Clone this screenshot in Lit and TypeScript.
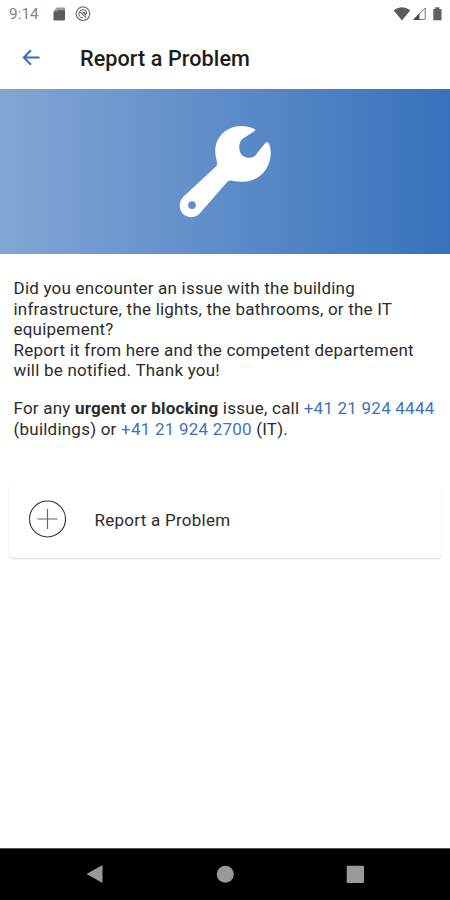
import { LitElement, html, css } from "lit";
import { customElement } from "lit/decorators.js";

@customElement("app-root")
export class AppRoot extends LitElement {
  static styles = css`
    :host {
      display: flex;
      flex-direction: column;
      width: 450px;
      height: 900px;
      overflow: hidden;
      background: #fff;
      color: #2c2c2c;
      font-family: Roboto, sans-serif;
    }
    svg { display: block; }
    .status {
      display: flex;
      justify-content: space-between;
      height: 28px;
      flex: none;
    }
    .left { display: flex; }
    .time {
      box-sizing: border-box;
      width: 44px;
      padding-left: 9px;
      font-size: 15.4px;
      line-height: 29px;
      color: #858585;
    }
    .bar {
      display: flex;
      align-items: center;
      height: 60.5px;
      flex: none;
    }
    .back { margin-left: 19px; }
    h1 {
      margin: 1px 0 0 37px;
      font-size: 21.6px;
      line-height: 30px;
      letter-spacing: 0.08px;
      font-weight: 500;
      color: #1c1c1c;
      white-space: nowrap;
    }
    .hero {
      display: flex;
      align-items: center;
      justify-content: center;
      height: 165.5px;
      flex: none;
      background: linear-gradient(90deg, #82a6d4, #3872bc);
    }
    .copy {
      padding: 24px 0 0 13.5px;
      height: 202.5px;
      flex: none;
      font-size: 17px;
      line-height: 20.55px;
      letter-spacing: 0.22px;
      white-space: nowrap;
    }
    p { margin: 0 0 17.5px; }
    b { font-weight: 700; }
    .tel { color: #3f72bd; text-decoration: none; }
    .card {
      display: flex;
      align-items: center;
      height: 77px;
      margin: 0 8px 0 9px;
      border-radius: 5px;
      flex: none;
      box-shadow: 0 1px 2px rgba(0, 0, 0, 0.15);
      clip-path: inset(5px -4px -5px -4px);
      font-size: 17px;
      letter-spacing: 0.26px;
    }
    .label { padding-top: 1px; }
    .plus { margin: 0 28.5px 0 19px; }
    .nav { margin-top: auto; height: 52px; flex: none; background: #000; border-top: 1px solid #555; box-sizing: border-box; }
  `;

  render() {
    return html`
      <div class="status">
        <div class="left">
          <span class="time">9:14</span>
          <svg width="50" height="28" viewBox="44 0 50 28">
            <path d="M57 7.500h7a1 1 0 0 1 1 1v4h-11v-2z" fill="#999" />
            <path d="M53.500 11.500h3l1.500-1.300h7v9.300a1 1 0 0 1-1 1h-9.500a1 1 0 0 1-1-1z" fill="#5c5c5c" />
            <circle cx="83" cy="13.700" r="6.800" fill="none" stroke="#777" stroke-width="1.200" />
            <path d="M79.800 16.500a4.200 4.200 0 0 1 2.500-6.700c2.700-.6 4.800 1.600 4.400 4.200M79.500 11.500l6.500 6M83 17.700c-1 .1-2-.2-2.700-.8" fill="none" stroke="#777" stroke-width="1.100" />
            <path d="M81.500 11.500l3.800.8 1 4z" fill="#666" />
          </svg>
        </div>
        <svg width="60" height="28" viewBox="390 0 60 28">
          <path d="M393.500 10.300Q402 4 410.300 10.300L402 20.500z" fill="#5c5c5c" />
          <path d="M425.200 8v11.400h-11.400z" fill="#fff" stroke="#777" stroke-width="1" />
          <path d="M419.500 13.500v6.400h-6.500z" fill="#4a4a4a" />
          <path d="M433.300 9h2v-1.700h4V9h2.200v11.300h-8.200z" fill="#616161" />
        </svg>
      </div>
      <div class="bar">
        <svg class="back" width="24" height="24" viewBox="19 46 24 24">
          <path d="M39.500 57.500H24.500M31 50.200L23.800 57.500L31 64.800" fill="none" stroke="#326fbe" stroke-width="2" />
        </svg>
        <h1>Report a Problem</h1>
      </div>
      <div class="hero">
        <svg width="130" height="120" viewBox="0 2 390 360">
          <path fill="#fff" fill-rule="evenodd" d="M284 56C256 43 222 43 197 61C171 80 162 108 167 137C169 149 173 157 171 163C169 168 164 172 159 177L70 259C58 271 56 290 64 304C74 322 101 326 117 312L199 218C205 212 210 210 216 211C257 220 294 211 317 178C334 153 336 125 327 99C324 95 318 95 315 99L291 129C286 138 280 142 270 142C255 143 242 135 239 121C236 108 238 96 246 87L284 62Q288 59 284 56zM96 273a11.500 11.500 0 1 1 0 23a11.500 11.500 0 1 1 0-23z" />
        </svg>
      </div>
      <div class="copy">
        <p>
          Did you encounter an issue with the building<br />infrastructure, the lights, the bathrooms, or the IT<br />equipement?<br />Report it from here and the competent departement<br />will be notified. Thank you!
        </p>
        <p>
          For any <b>urgent or blocking</b> issue, call <a class="tel">+41 21 924 4444</a><br />(buildings) or <a class="tel">+41 21 924 2700</a> (IT).
        </p>
      </div>
      <div class="card">
        <svg class="plus" width="38" height="38" viewBox="0 0 38 38">
          <circle cx="19.500" cy="19" r="18" fill="none" stroke="#333" stroke-width="1.100" />
          <path d="M9.500 19H29.500M19.500 9V29" stroke="#666" stroke-width="1.200" />
        </svg>
        <span class="label">Report a Problem</span>
      </div>
      <div class="nav">
        <svg width="450" height="51" viewBox="0 849 450 51" fill="#999">
          <path d="M86.500 874L102.500 865V883z" />
          <circle cx="225.300" cy="874.200" r="8.500" />
          <rect x="346.700" y="865.700" width="17.300" height="17.300" rx="1" />
        </svg>
      </div>
    `;
  }
}
